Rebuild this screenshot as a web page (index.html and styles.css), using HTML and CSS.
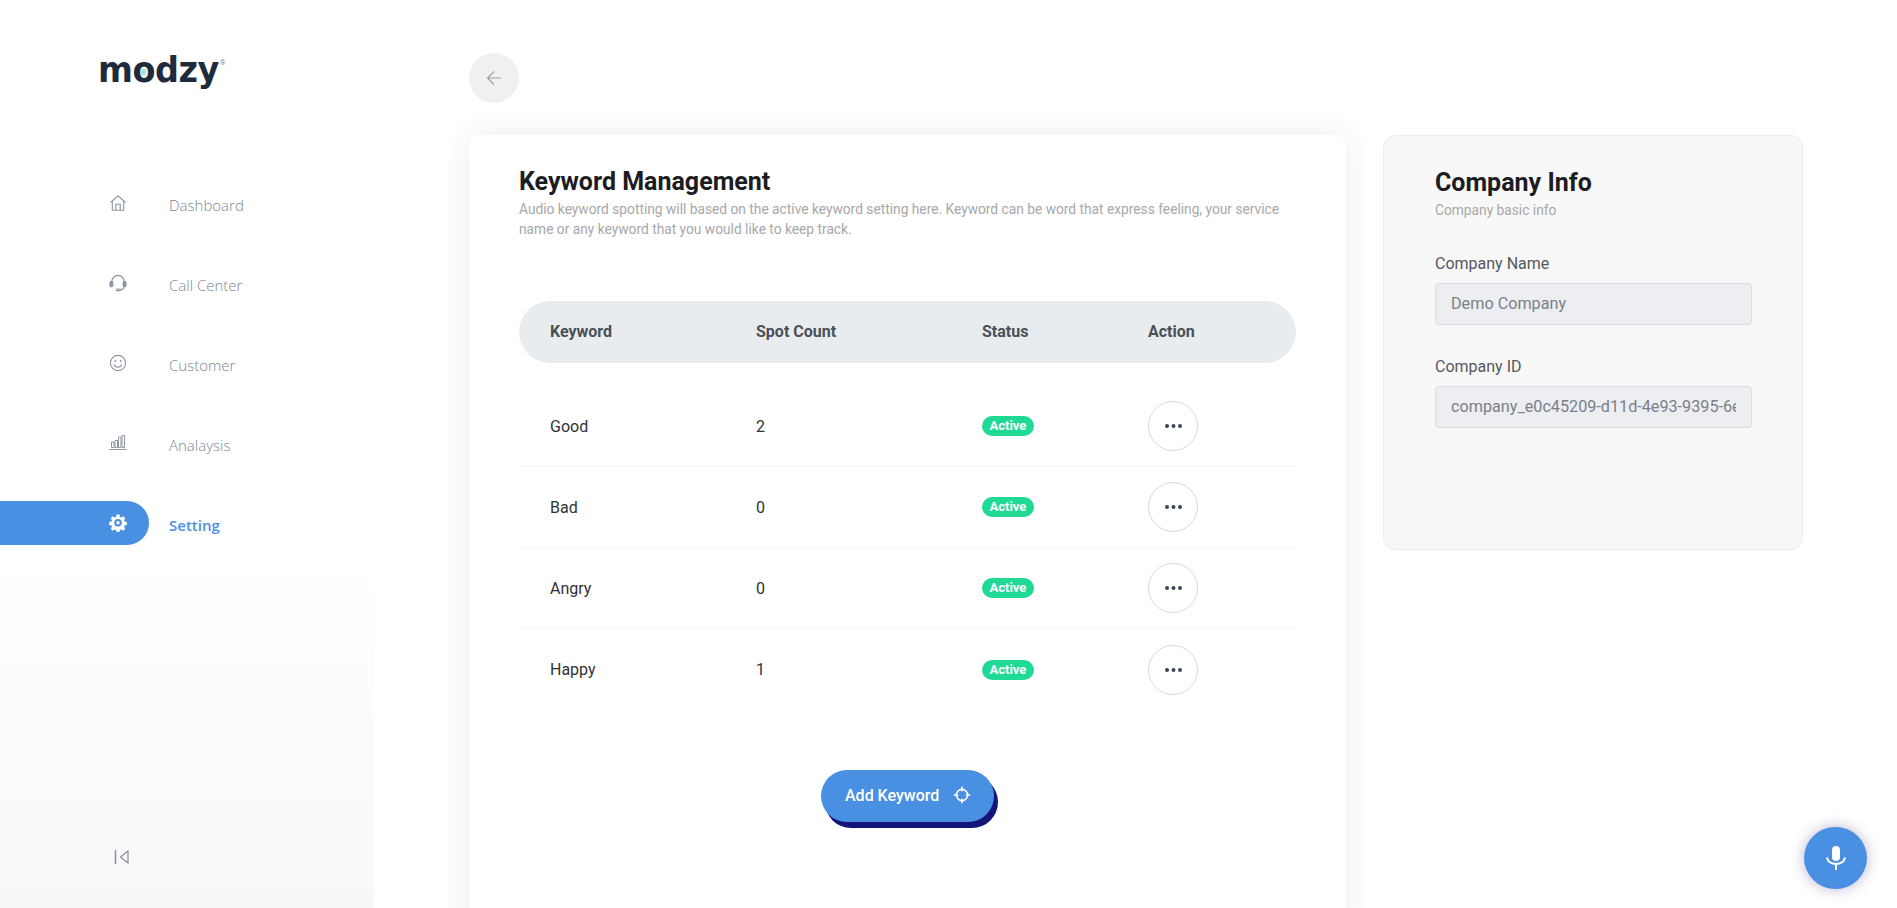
FILE: index.html
```html
<!DOCTYPE html>
<html lang="en">
<head>
    <meta charset="UTF-8">
    <meta name="viewport" content="width=device-width, initial-scale=1.0">
    <title>Keyword Management</title>
    <link rel="stylesheet" href="styles.css">
</head>
<body>
    <div class="layout">
        <aside class="sidebar">
            <div class="logo"><span class="logo-text">m<span class="logo-o">o</span>dzy</span><sup class="logo-mark">®</sup></div>

            <nav class="nav">
                <a class="nav-item">
                    <span class="nav-icon">
                        <svg viewBox="0 0 18 18" width="18" height="18" fill="none" stroke="currentColor" stroke-width="1.1"><path d="M1.5 8.5 9 1.8l7.5 6.7"/><path d="M3.3 7.2v9h11.4v-9"/><path d="M6.8 16.2v-6h4.4v6"/></svg>
                    </span>
                    <span class="nav-label">Dashboard</span>
                </a>
                <a class="nav-item">
                    <span class="nav-icon">
                        <svg viewBox="0 0 18 18" width="18" height="18" fill="none" stroke="currentColor" stroke-width="1.2"><path d="M2.8 9.5V7.6a6.2 6.2 0 0 1 12.4 0v1.9"/><rect x="1" y="7.6" width="2.8" height="5" rx="1.3" fill="currentColor"/><rect x="14.2" y="7.6" width="2.8" height="5" rx="1.3" fill="currentColor"/><path d="M15 12.6c0 2-1.6 3.2-3.6 3.2"/><rect x="7.4" y="15" width="4.2" height="1.7" rx=".8"/></svg>
                    </span>
                    <span class="nav-label">Call Center</span>
                </a>
                <a class="nav-item">
                    <span class="nav-icon">
                        <svg viewBox="0 0 18 18" width="18" height="18" fill="none" stroke="currentColor" stroke-width="1.1"><circle cx="9" cy="9" r="7.6"/><circle cx="6.3" cy="7" r=".9" fill="currentColor" stroke="none"/><circle cx="11.7" cy="7" r=".9" fill="currentColor" stroke="none"/><path d="M5 10.6c.8 1.7 2.2 2.6 4 2.6s3.2-.9 4-2.6"/></svg>
                    </span>
                    <span class="nav-label">Customer</span>
                </a>
                <a class="nav-item">
                    <span class="nav-icon">
                        <svg viewBox="0 0 18 18" width="18" height="18" fill="none" stroke="currentColor" stroke-width="1"><path d="M.5 15.500h17"/><path d="M2.500 13.500V8h2.500v5.500zM6 13.500V6.500h2.500v7zM9.500 13.500V3h2.500v10.500zM13 13.500V1.500h2.500v12z"/></svg>
                    </span>
                    <span class="nav-label">Analaysis</span>
                </a>
                <a class="nav-item active">
                    <span class="nav-icon">
                        <svg viewBox="0 0 18 18" width="18" height="18"><path fill="currentColor" fill-rule="evenodd" d="M7.500 .8h3l.4 2.300 1.300.6 2-1.300 2.100 2.100-1.300 2 .6 1.300 2.300.4v3l-2.300.4-.6 1.300 1.300 2-2.100 2.100-2-1.300-1.300.6-.4 2.300h-3l-.4-2.300-1.300-.6-2 1.300-2.100-2.100 1.300-2-.6-1.300-2.300-.4v-3l2.300-.4.6-1.300-1.300-2 2.100-2.100 2 1.300 1.300-.6zM9 5.200a3.800 3.800 0 1 0 0 7.600 3.800 3.800 0 0 0 0-7.600zM9 7.300a1.700 1.700 0 1 1 0 3.400 1.700 1.700 0 0 1 0-3.400z" transform="translate(0 -.2)"/></svg>
                    </span>
                    <span class="nav-label">Setting</span>
                </a>
            </nav>

            <button class="collapse" type="button">
                <svg viewBox="0 0 16 16" width="16" height="16" fill="none" stroke="#8a8f96" stroke-width="1.2"><path d="M1.500 1v14" stroke-width="1.500"/><path d="M14 2v12L6.500 8z"/></svg>
            </button>
        </aside>

        <main class="main">
            <button class="back" type="button">
                <svg viewBox="0 0 16 16" width="16" height="16" fill="none" stroke="#9aa0a8" stroke-width="1.100"><path d="M15 8H1.500M8 1.500 1.500 8 8 14.500"/></svg>
            </button>

            <div class="columns">
                <section class="card">
                    <h2>Keyword Management</h2>
                    <p class="sub">Audio keyword spotting will based on the active keyword setting here. Keyword can be word that express feeling, your service name or any keyword that you would like to keep track.</p>

                    <div class="table">
                        <div class="table-head">
                            <span>Keyword</span>
                            <span>Spot Count</span>
                            <span>Status</span>
                            <span>Action</span>
                        </div>
                        <div class="table-row">
                            <span>Good</span>
                            <span>2</span>
                            <span><b class="badge">Active</b></span>
                            <span><button class="dots" type="button"><svg viewBox="0 0 17 4" width="17" height="4" fill="currentColor"><circle cx="2" cy="2" r="2"/><circle cx="8.500" cy="2" r="2"/><circle cx="15" cy="2" r="2"/></svg></button></span>
                        </div>
                        <div class="table-row">
                            <span>Bad</span>
                            <span>0</span>
                            <span><b class="badge">Active</b></span>
                            <span><button class="dots" type="button"><svg viewBox="0 0 17 4" width="17" height="4" fill="currentColor"><circle cx="2" cy="2" r="2"/><circle cx="8.500" cy="2" r="2"/><circle cx="15" cy="2" r="2"/></svg></button></span>
                        </div>
                        <div class="table-row">
                            <span>Angry</span>
                            <span>0</span>
                            <span><b class="badge">Active</b></span>
                            <span><button class="dots" type="button"><svg viewBox="0 0 17 4" width="17" height="4" fill="currentColor"><circle cx="2" cy="2" r="2"/><circle cx="8.500" cy="2" r="2"/><circle cx="15" cy="2" r="2"/></svg></button></span>
                        </div>
                        <div class="table-row">
                            <span>Happy</span>
                            <span>1</span>
                            <span><b class="badge">Active</b></span>
                            <span><button class="dots" type="button"><svg viewBox="0 0 17 4" width="17" height="4" fill="currentColor"><circle cx="2" cy="2" r="2"/><circle cx="8.500" cy="2" r="2"/><circle cx="15" cy="2" r="2"/></svg></button></span>
                        </div>
                    </div>

                    <div class="add-wrap">
                        <button class="add" type="button">
                            Add Keyword
                            <svg viewBox="0 0 18 18" width="18" height="18" fill="none" stroke="#fff" stroke-width="1.600"><circle cx="9" cy="9" r="5.600"/><path d="M9 .8v4.400M9 12.800v4.400M.8 9h4.400M12.800 9h4.400"/></svg>
                        </button>
                    </div>
                </section>

                <section class="info">
                    <h2>Company Info</h2>
                    <p class="sub">Company basic info</p>

                    <label class="field-label">Company Name</label>
                    <input class="field" type="text" value="Demo Company" disabled>

                    <label class="field-label">Company ID</label>
                    <input class="field" type="text" value="company_e0c45209-d11d-4e93-9395-6e1f7a20" disabled>
                </section>
            </div>
        </main>
    </div>

    <button class="mic" type="button">
        <svg viewBox="0 0 20 26" width="20" height="26" fill="none" stroke="#fff" stroke-width="2"><rect x="6" y="1" width="8" height="15" rx="4" fill="#fff" stroke="none"/><path d="M1 12.500c.6 4 4.200 6.500 9 6.500s8.400-2.500 9-6.500"/><path d="M10 19v6"/></svg>
    </button>
</body>
</html>
```

FILE: styles.css
```css
* {
    box-sizing: border-box;
}

html, body {
    height: 100%;
}

body {
    margin: 0;
    overflow: hidden;
    font-family: Roboto, sans-serif;
    background-color: #fff;
    color: #212529;
}

button {
    font-family: inherit;
    cursor: pointer;
}

.layout {
    display: flex;
    height: 100vh;
}

/* sidebar */
.sidebar {
    width: 374px;
    flex-shrink: 0;
    display: flex;
    flex-direction: column;
    background: linear-gradient(to bottom, #fff 0, #fff 550px, #f8f8fb 100%);
}

.logo {
    display: flex;
    align-items: flex-start;
    height: 44px;
    margin: 48px 0 0 98px;
    color: #1e2b3c;
}

.logo-text {
    font-family: "DejaVu Sans", sans-serif;
    font-weight: 700;
    font-size: 36px;
    line-height: 44px;
    letter-spacing: -.5px;
    transform: scaleX(.93);
    transform-origin: left;
    width: 121px;
}

.logo-o {
    position: relative;
}

.logo-o::after {
    content: '';
    position: absolute;
    left: 9px;
    top: 20px;
    width: 6px;
    height: 6px;
    background-color: #a8e6d8;
}

.logo-mark {
    font-size: 7px;
    line-height: 1;
    margin: 12px 0 0 1px;
    color: #8a8f96;
}

.nav {
    display: flex;
    flex-direction: column;
    gap: 36px;
    margin-top: 89px;
}

.nav-item {
    display: flex;
    align-items: center;
    height: 44px;
    color: #8c95a0;
}

.nav-icon {
    display: flex;
    justify-content: flex-end;
    align-items: center;
    width: 149px;
    height: 44px;
    padding-right: 22px;
    margin-right: 20px;
    border-radius: 0 22px 22px 0;
}

.nav-label {
    padding-top: 3px;
    font-family: "Open Sans", sans-serif;
    font-weight: 300;
    font-size: 15px;
    color: #7c8793;
}

.nav-item.active .nav-icon {
    background-color: #4a90e2;
    color: #fff;
}

.nav-item.active .nav-label {
    font-weight: 600;
    color: #4a90e2;
}

.collapse {
    margin: auto 0 43px 114px;
    width: 16px;
    height: 16px;
    padding: 0;
    display: flex;
    border: none;
    background: none;
}

/* main area */
.main {
    flex: 1;
    padding: 53px 0 0 95px;
    min-width: 0;
}

.back {
    display: flex;
    align-items: center;
    justify-content: center;
    width: 50px;
    height: 50px;
    padding: 0;
    border: none;
    border-radius: 50%;
    background-color: #f0f0f0;
}

.columns {
    display: flex;
    align-items: flex-start;
    gap: 37px;
    margin-top: 32px;
}

.card {
    width: 877px;
    height: 800px;
    padding: 32px 50px 0;
    background: #fff;
    border-radius: 10px;
    box-shadow: 0 0 30px rgba(40, 40, 90, 0.09);
}

h2 {
    margin: 0 0 2px;
    font-size: 25px;
    line-height: 30px;
    font-weight: 700;
    color: #1b1d21;
}

.sub {
    margin: 0;
    font-size: 13.750px;
    line-height: 20px;
    color: #a8a8a8;
}

.table {
    margin-top: 62px;
}

.table-head,
.table-row {
    display: grid;
    grid-template-columns: 206px 226px 166px 1fr;
    align-items: center;
    padding-left: 31px;
    font-size: 16px;
}

.table-head {
    height: 62px;
    padding-bottom: 2px;
    margin-bottom: 23px;
    border-radius: 31px;
    background-color: #e9ecef;
    font-weight: 700;
    color: #495057;
}

.table-row {
    height: 81px;
    border-bottom: 1px solid #f6f6f6;
    color: #2f3237;
}

.table-row:last-child {
    border-bottom: none;
}

.badge {
    display: inline-block;
    height: 20px;
    padding: 0 7.500px;
    border-radius: 10px;
    background-color: #20d995;
    color: #fff;
    font-size: 13px;
    line-height: 20px;
    font-weight: 700;
    vertical-align: middle;
}

.dots {
    display: flex;
    align-items: center;
    justify-content: center;
    width: 50px;
    height: 50px;
    padding: 0;
    border: 1px solid #d8d8d8;
    border-radius: 50%;
    background: #fff;
    color: #3d4654;
}

.add-wrap {
    display: flex;
    justify-content: center;
    margin-top: 60px;
}

.add {
    display: flex;
    align-items: center;
    gap: 14px;
    width: 173px;
    height: 52px;
    padding: 0 0 2px 24px;
    border: none;
    border-radius: 26px;
    background-color: #4a90e2;
    box-shadow: 4px 6px 0 #14147a;
    color: #fff;
    font-size: 16px;
    font-weight: 500;
}

/* company panel */
.info {
    width: 420px;
    height: 415px;
    padding: 32px 51px 0;
    background-color: #f8f8f8;
    border: 1px solid #ececec;
    border-radius: 12px;
}

.field-label {
    display: block;
    margin-top: 34px;
    font-size: 16px;
    line-height: 20px;
    color: #54585e;
}

.field-label + .field {
    margin: 9px 0 0;
}

.field-label:nth-of-type(2) {
    margin-top: 32px;
}

.field {
    display: block;
    width: 317px;
    height: 42px;
    padding: 0 15px 2px;
    border: 1px solid #d8dce1;
    border-radius: 4px;
    background-color: #eceef2;
    color: #7a8087;
    font-family: inherit;
    font-size: 16.200px;
}

/* floating mic */
.mic {
    position: fixed;
    right: 30px;
    bottom: 19px;
    display: flex;
    align-items: center;
    justify-content: center;
    width: 63px;
    height: 62px;
    padding: 0;
    border: none;
    border-radius: 50%;
    background-color: #4a90e2;
    box-shadow: 0 0 14px rgba(60, 40, 120, 0.35);
}
```
